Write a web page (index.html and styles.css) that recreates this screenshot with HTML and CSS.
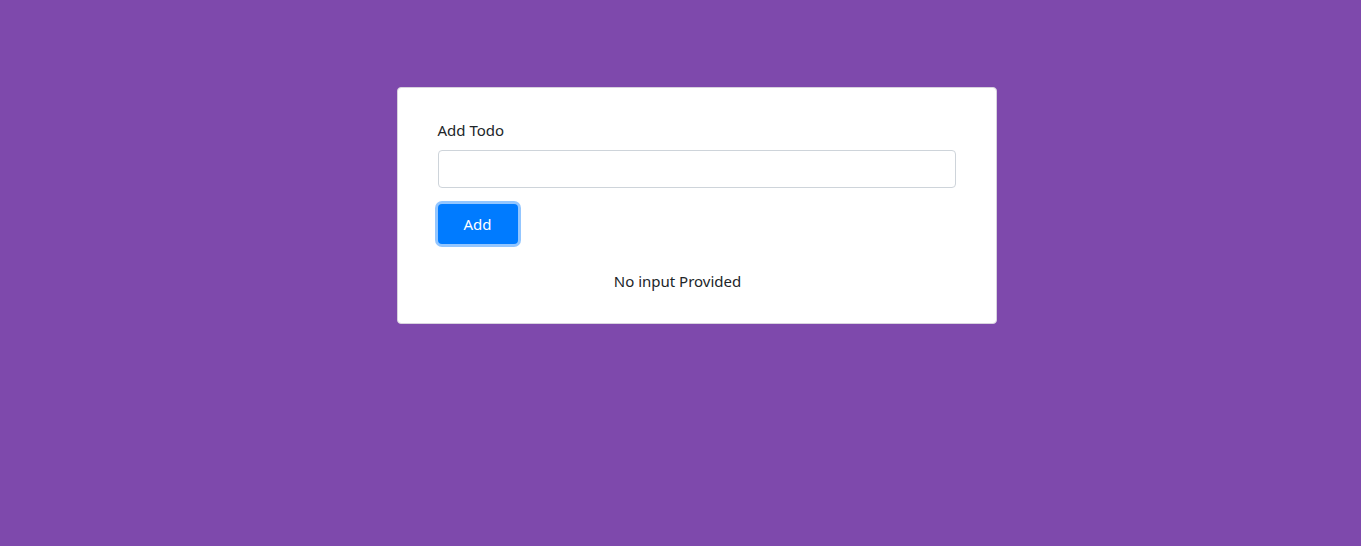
FILE: index.html
```html
<!DOCTYPE html>
<html lang="en">
<head>
<meta charset="utf-8">
<meta name="viewport" content="width=device-width, initial-scale=1">
<title>Todo</title>
<link rel="stylesheet" href="styles.css">
</head>
<body>
<main class="page">
  <section class="card">
    <form class="todo-form">
      <label class="label" for="todo">Add Todo</label>
      <input class="field" id="todo" type="text">
      <button class="button" type="button">Add</button>
    </form>
    <p class="message">No input Provided</p>
  </section>
</main>
</body>
</html>
```
FILE: styles.css
```css
* {
  box-sizing: border-box;
}

body {
  margin: 0;
  background: #7e49ac;
  color: #212529;
  font-family: "Segoe UI", "Noto Sans", "Open Sans", sans-serif;
  font-size: 15px;
  line-height: 24px;
}

.page {
  padding: 87px 16px 48px 48px;
}

.card {
  max-width: 600px;
  margin: 0 auto;
  padding: 30px 40px;
  background: #fff;
  border: 1px solid #d8d2de;
  border-radius: 4px;
}

.todo-form {
  display: flex;
  flex-direction: column;
  align-items: flex-start;
}

.label {
  margin-bottom: 8px;
}

.field {
  width: 100%;
  height: 38px;
  padding: 6px 12px;
  border: 1px solid #ced4da;
  border-radius: 4px;
  font: inherit;
}

.button {
  width: 80px;
  height: 40px;
  margin-top: 16px;
  padding: 0;
  border: 0;
  border-radius: 4px;
  background: #007bff;
  box-shadow: 0 0 0 3px #93c6ff;
  color: #fff;
  font: inherit;
}

.message {
  margin: 25px 38px 0 0;
  text-align: center;
}
```
